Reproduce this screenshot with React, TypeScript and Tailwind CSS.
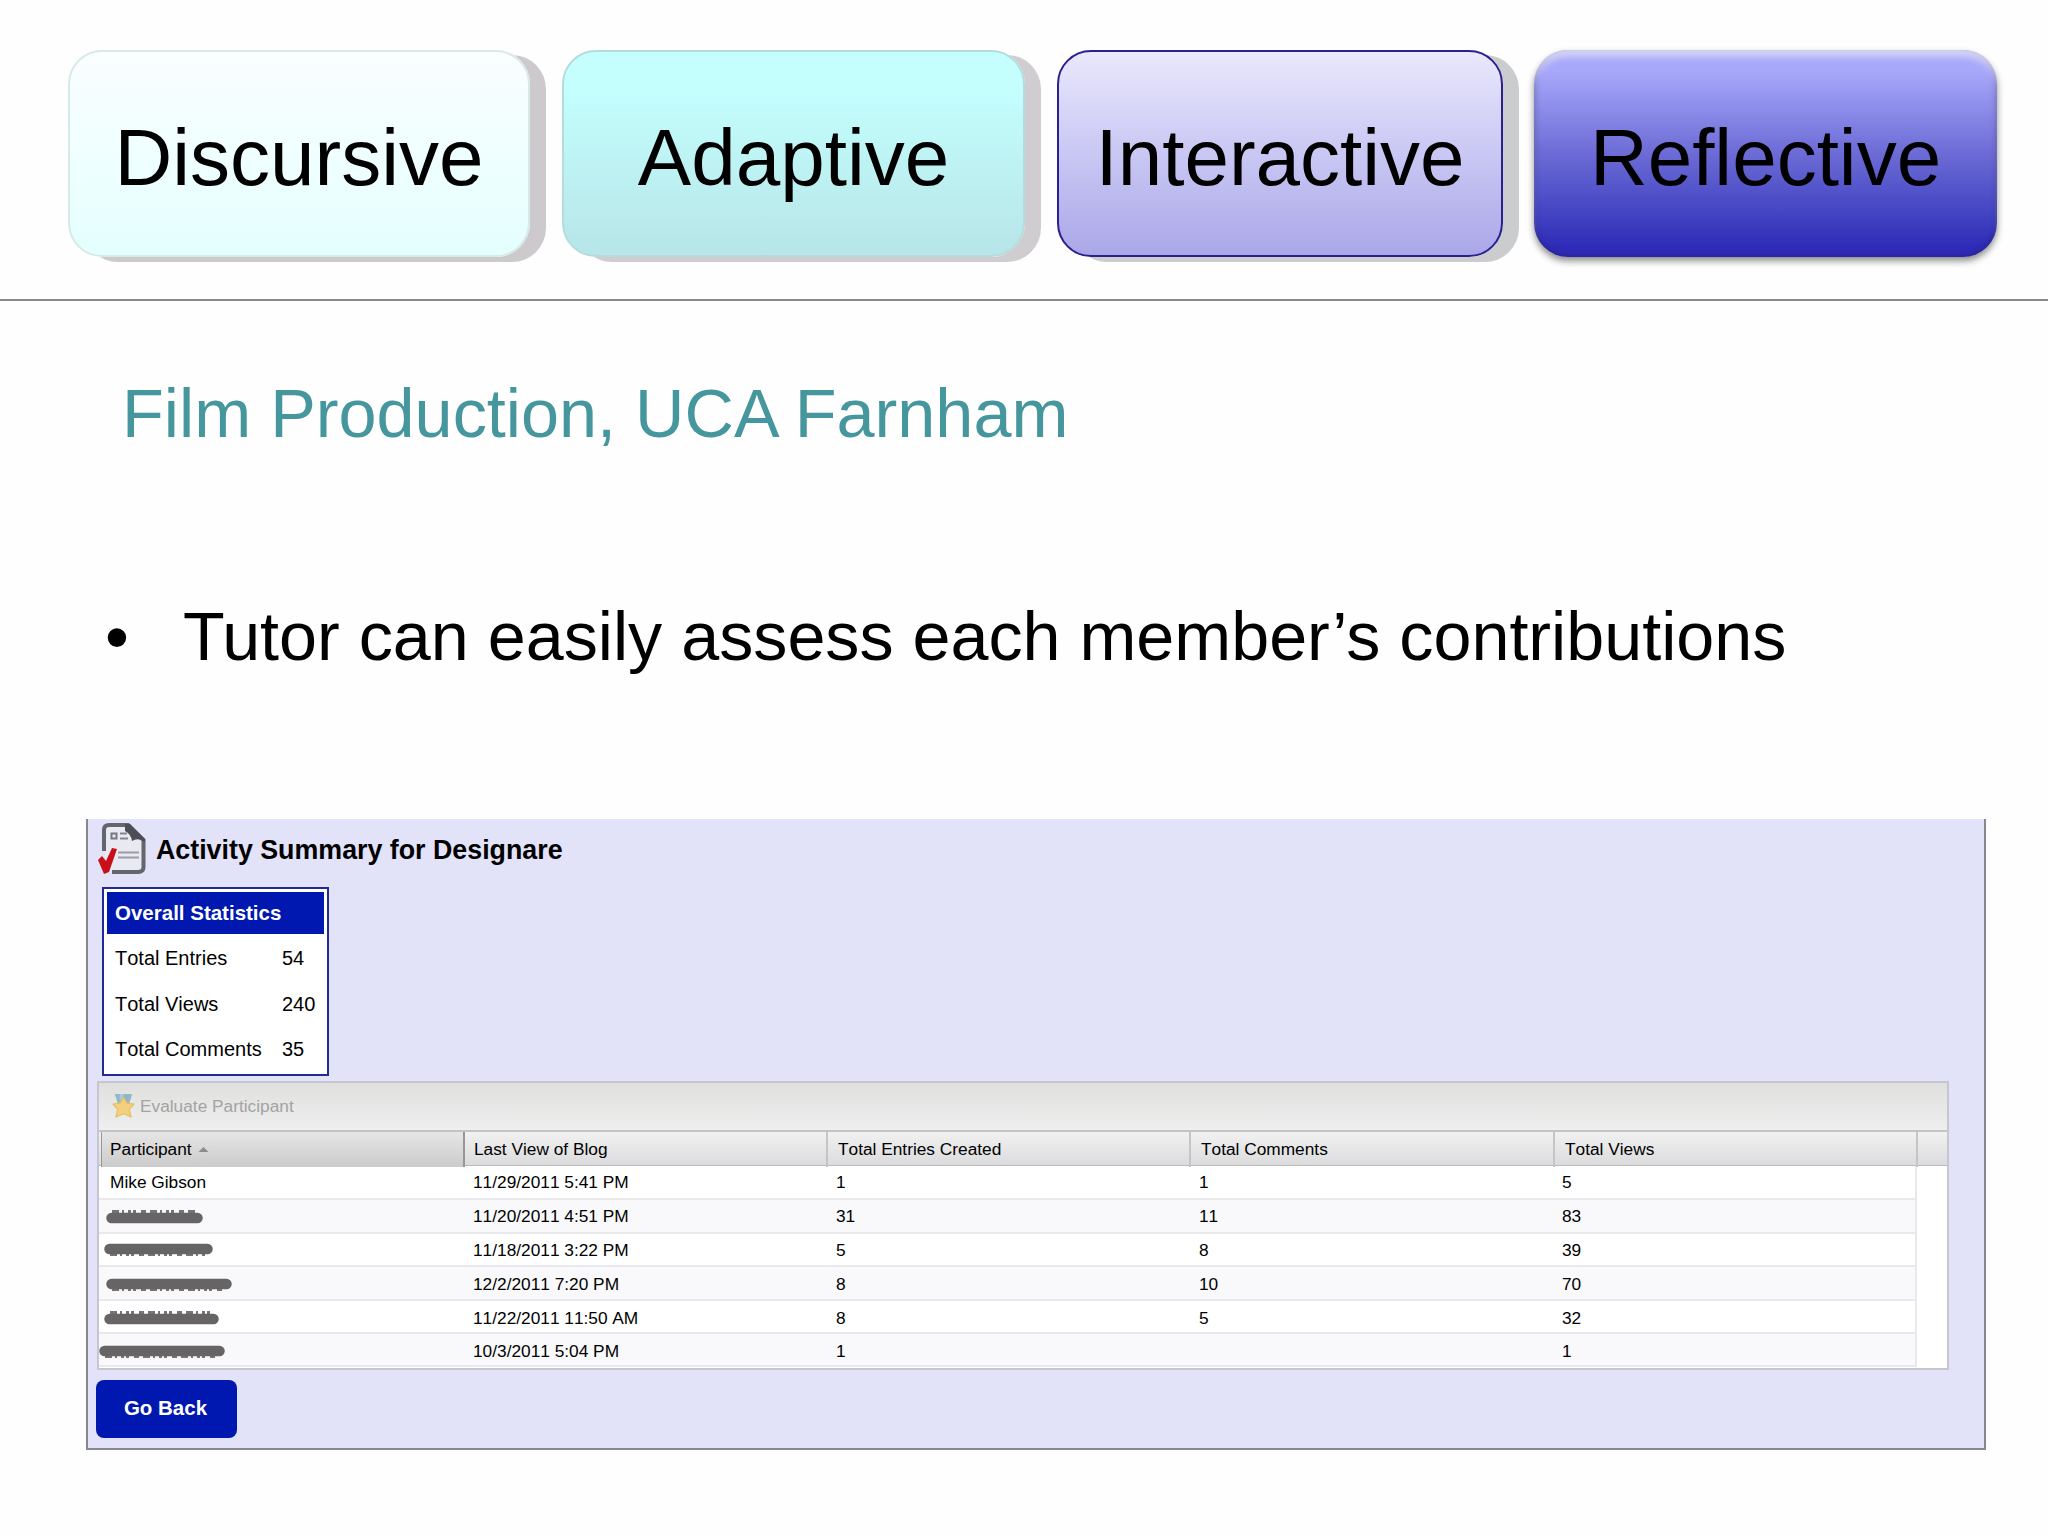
type Row = {
    name?: string
    strike?: { x: number, y: number, w: number, edge: number }
    lastView: string
    entries: string
    comments: string
    views: string
    size: string
}

const stats = [
    { label: "Total Entries", value: "54" },
    { label: "Total Views", value: "240" },
    { label: "Total Comments", value: "35" },
]

const rows: Row[] = [
    { name: "Mike Gibson", lastView: "11/29/2011 5:41 PM", entries: "1", comments: "1", views: "5", size: "h-[34px] leading-[33px]" },
    { strike: { x: 7, y: 18, w: 97, edge: -6 }, lastView: "11/20/2011 4:51 PM", entries: "31", comments: "11", views: "83", size: "h-[34px] leading-[33px]" },
    { strike: { x: 5, y: 15, w: 109, edge: 5 }, lastView: "11/18/2011 3:22 PM", entries: "5", comments: "8", views: "39", size: "h-[33px] leading-[32px]" },
    { strike: { x: 7, y: 17, w: 126, edge: 5 }, lastView: "12/2/2011 7:20 PM", entries: "8", comments: "10", views: "70", size: "h-[34px] leading-[35px]" },
    { strike: { x: 5, y: 18, w: 115, edge: -6 }, lastView: "11/22/2011 11:50 AM", entries: "8", comments: "5", views: "32", size: "h-[33px] leading-[35px]" },
    { strike: { x: 0, y: 17, w: 126, edge: 5 }, lastView: "10/3/2011 5:04 PM", entries: "1", comments: "", views: "1", size: "h-[33px] leading-[35px]" },
]

const columns = "grid grid-cols-[366px_363px_363px_364px_1fr]"

// pen stroke that hides a participant's name
const Strike = ({ x, y, w, edge }: { x: number, y: number, w: number, edge: number }) => (
    <svg className="absolute left-0 top-0 overflow-visible" width="240" height="34">
        <line x1={x + 6} y1={y + edge} x2={x + w - 6} y2={y + edge} stroke="#3c3c3c" strokeWidth="4" strokeDasharray="7 3 2 4 3 2 3 5 5 4" opacity="0.7" />
        <line x1={x + 5.5} y1={y} x2={x + w - 5.5} y2={y} stroke="#666464" strokeWidth="10.5" strokeLinecap="round" />
    </svg>
)

const ReportIcon = () => (
    <svg width="50" height="54" viewBox="0 0 50 54" fill="none">
        <path d="M7 5 Q7 3 10 3 H30 L46 17 V46 Q46 50 42 50 H14 L7 40Z" fill="#e9e9f2" />
        <path d="M6 29 V8 Q6 3 11 3 H30 L45.500 18 V45 Q45.500 50 40 50 H14" stroke="#65656d" strokeWidth="4" />
        <path d="M27 2 H32 L47 17 V20 Q40 15 34 19 Q33 12 27 9Z" fill="#4d4d55" />
        <rect x="13.500" y="11.500" width="5" height="5" stroke="#77777f" strokeWidth="2" />
        <path d="M22 11.500 H29 M22 16.500 H30" stroke="#85858d" strokeWidth="2" />
        <path d="M20 30.500 H41 M20 35.500 H41" stroke="#9c9ca6" strokeWidth="2.200" />
        <path d="M0 38 L4 34 L8 39 L14 26 L19 27 L11 50 L6 52Z" fill="#c90f18" />
    </svg>
)

const MedalIcon = () => (
    <svg width="25" height="27" viewBox="0 0 26 28">
        <path d="M4 1 H22 L19 11 H7Z" fill="#90b8c9" />
        <path d="M9 1 H13 V7 H9Z" fill="#a9cbd6" />
        <path d="M13 4.500 L16.500 10.500 L24 11.500 L19 17 L21 25 L13 21.500 L5 25 L7 17 L2 11.500 L9.500 10.500Z" fill="#f3d17c" stroke="#e8bd68" strokeWidth="1.200" strokeLinejoin="round" />
    </svg>
)

const Tabs = () => {
    const base = "flex h-[207px] items-center justify-center rounded-[34px] pt-2 text-[80px] leading-none"
    return (
        <nav className="flex h-[301px] shrink-0 border-b-2 border-[#8c888c] pt-[50px] pl-[68px]">
            <div className={`${base} w-[462px] border-2 border-[#d6ebe6] bg-linear-to-b from-[#fafeff] to-[#e4fffe] shadow-[16px_5px_0_#cdcacd]`}>
                Discursive
            </div>
            <div className={`${base} ml-8 w-[463px] border-2 border-[#b4dcdc] bg-linear-to-b from-[#c4fffe] from-15% to-[#b7e5e8] shadow-[16px_5px_0_#cfcdd0]`}>
                Adaptive
            </div>
            <div className={`${base} ml-8 w-[446px] border-2 border-[#2a2090] bg-linear-to-b from-[#eae8fd] to-[#aaa7e8] shadow-[16px_5px_0_#cbccce]`}>
                Interactive
            </div>
            <div className={`${base} ml-[31px] h-[206px] w-[463px] bg-linear-to-b from-[#a8a8fa] from-10% via-[#6a68d4] via-52% to-[#2f2bb8] to-95% shadow-[0_4px_7px_rgba(0,0,0,0.45),inset_0_9px_7px_-3px_rgba(255,255,255,0.65),inset_0_0_6px_rgba(30,25,80,0.6)]`}>
                Reflective
            </div>
        </nav>
    )
}

const Statistics = () => (
    <div className="ml-[14px] mt-[11px] h-[189px] w-[227px] border-2 border-[#232a94] bg-white px-[3px] pt-[3px] text-[20px] [font-kerning:none]">
        <h3 className="h-[42px] bg-[#0018b0] pl-2 text-[20.500px] leading-[42px] font-bold text-white">Overall Statistics</h3>
        {stats.map((stat) => (
            <div key={stat.label} className="flex h-[45.500px] pl-2 leading-[49px]">
                <span className="w-[167px] shrink-0">{stat.label}</span>
                <span>{stat.value}</span>
            </div>
        ))}
    </div>
)

const ParticipantTable = () => (
    <div className="ml-[9px] mt-[5px] h-[289px] w-[1852px] border-2 border-[#c6c6d0] bg-white text-[17.300px] [font-kerning:none]">
        <div className="flex h-[49px] items-center border-b-2 border-[#c4c4c6] bg-linear-to-b from-[#dfdfde] to-[#efefef] pl-3 text-[#a3a3a3]">
            <MedalIcon />
            <span className="pl-1 leading-[51px]">Evaluate Participant</span>
        </div>
        <div className={`${columns} h-[34px] border-b border-[#b9b9b9] bg-linear-to-b from-[#f1f1f1] to-[#dcdcde] leading-[35px]`}>
            <div className="ml-[2px] flex border-r-2 border-l border-[#96969a] bg-linear-to-b from-[#e6e6e6] to-[#cbcbcb] pl-2">
                Participant
                <svg className="mt-[15px] ml-1.5" width="11" height="5" viewBox="0 0 12 6">
                    <path d="M0 6 L6 0 L12 6Z" fill="#8c8c8c" />
                </svg>
            </div>
            <div className="border-r-2 border-[#c5c5c7] pl-[9px]">Last View of Blog</div>
            <div className="border-r-2 border-[#c5c5c7] pl-[10px]">Total Entries Created</div>
            <div className="border-r-2 border-[#c5c5c7] pl-[10px]">Total Comments</div>
            <div className="mr-[29px] border-r-2 border-[#c5c5c7] pl-[10px]">Total Views</div>
        </div>
        {rows.map((row, index) => (
            <div key={index} className={`${columns} ${row.size} mr-[30px] border-r-2 border-b-2 border-[#e9e9ed] even:bg-[#f9f9fb]`}>
                <div className="relative pl-[11px]">
                    {row.name}
                    {row.strike && <Strike {...row.strike} />}
                </div>
                <div className="pl-2">{row.lastView}</div>
                <div className="pl-2">{row.entries}</div>
                <div className="pl-2">{row.comments}</div>
                <div className="pl-[7px]">{row.views}</div>
            </div>
        ))}
    </div>
)

const App = () => {
    return (
        <main className="flex h-[1536px] w-[2048px] flex-col overflow-hidden bg-[#fefefe] font-['Liberation_Sans',Arial,sans-serif] text-black">
            <Tabs />
            <h1 className="mt-[72px] ml-[122px] text-[68.400px] leading-[80px] text-[#46969e]">Film Production, UCA Farnham</h1>
            <ul className="mt-[143px] ml-[105px]">
                <li className="flex text-[68.250px] leading-[80px]">
                    <span className="w-[78px]">•</span>
                    Tutor can easily assess each member’s contributions
                </li>
            </ul>
            <section className="mt-[143px] ml-[86px] h-[631px] w-[1900px] border-2 border-t-0 border-[#87878f] bg-[#e2e2f9]">
                <div className="flex h-[57px] items-center pt-[2px] pl-[10px]">
                    <ReportIcon />
                    <h2 className="pt-1 pl-2 text-[26.800px] font-bold">Activity Summary for Designare</h2>
                </div>
                <Statistics />
                <ParticipantTable />
                <button className="mt-[10px] ml-2 h-[58px] w-[141px] rounded-lg bg-[#0018b0] pr-[2px] pb-[2px] text-[20.500px] font-bold text-white">Go Back</button>
            </section>
        </main>
    )
}

export default App
